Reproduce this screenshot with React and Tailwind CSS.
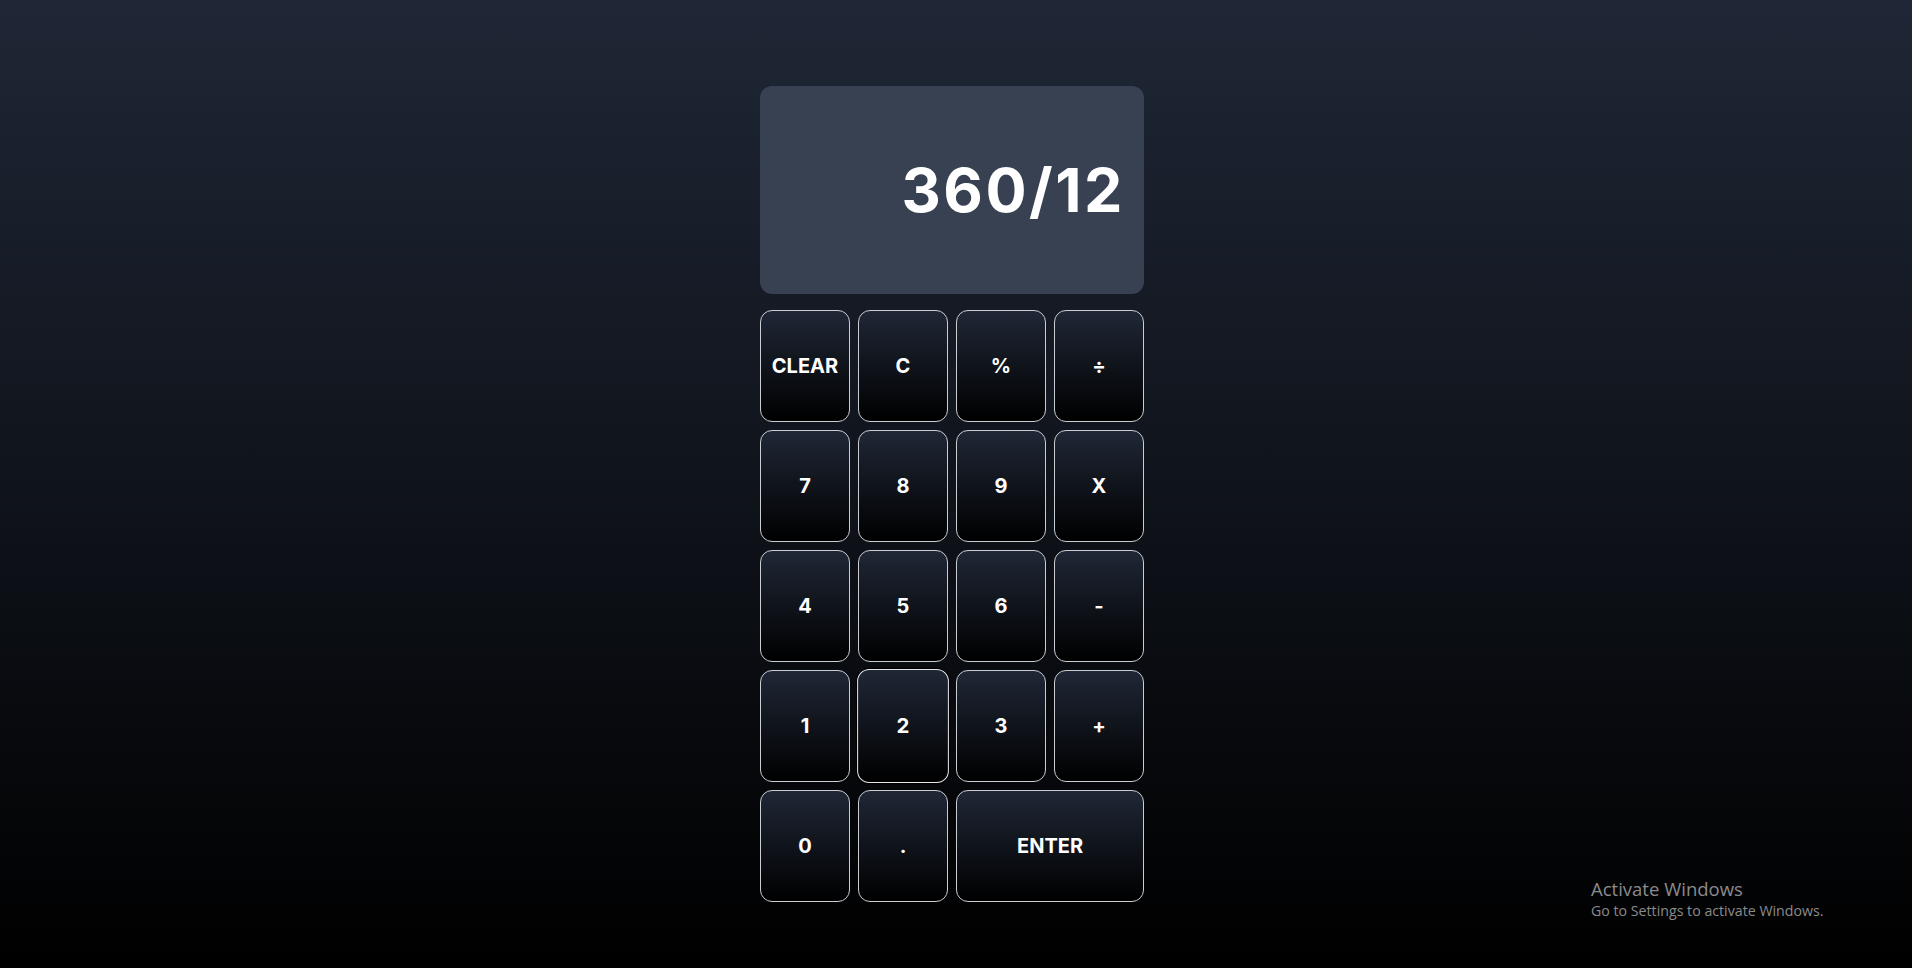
import { useState } from 'react';

const keys = [
  { label: 'CLEAR' },
  { label: 'C' },
  { label: '%' },
  { label: '÷' },
  { label: '7' },
  { label: '8' },
  { label: '9' },
  { label: 'X' },
  { label: '4' },
  { label: '5' },
  { label: '6' },
  { label: '-' },
  { label: '1' },
  { label: '2', hover: true },
  { label: '3' },
  { label: '+' },
  { label: '0' },
  { label: '.' },
  { label: 'ENTER', wide: true },
];

export default function App() {
  const [display] = useState('360/12');

  return (
    <div className="relative min-h-screen bg-linear-to-b/srgb from-[#1f2736] to-black flex flex-col items-center pt-[86px] pr-2 font-['Inter',sans-serif]">
      <div className="w-96">
        {/* display */}
        <div className="h-52 mb-4 bg-[#374151] rounded-xl flex items-center justify-end pl-5 pr-[19px]">
          <span className="text-[61px] font-bold text-white leading-none tracking-[2.5px]">{display}</span>
        </div>

        {/* keypad */}
        <div className="grid grid-cols-4 gap-2">
          {keys.map((k) => (
            <button
              key={k.label}
              className={
                'h-28 rounded-xl border text-white text-xl font-bold bg-linear-to-b/srgb from-[#1f2736] to-black flex items-center justify-center ' +
                (k.wide ? 'col-span-2 ' : '') +
                (k.hover
                  ? 'border-[#e5e7eb] scale-[1.02] shadow-[0_0_0_1px_#000]'
                  : 'border-[#c9ccd1]')
              }
            >
              {k.label}
            </button>
          ))}
        </div>
      </div>

      {/* windows watermark */}
      <div className="absolute left-[1591px] top-[877px] text-[#8b8b8b] font-['Open_Sans',sans-serif]">
        <div className="text-[18.5px] leading-6">Activate Windows</div>
        <div className="text-[14.2px] leading-5">Go to Settings to activate Windows.</div>
      </div>
    </div>
  );
}
